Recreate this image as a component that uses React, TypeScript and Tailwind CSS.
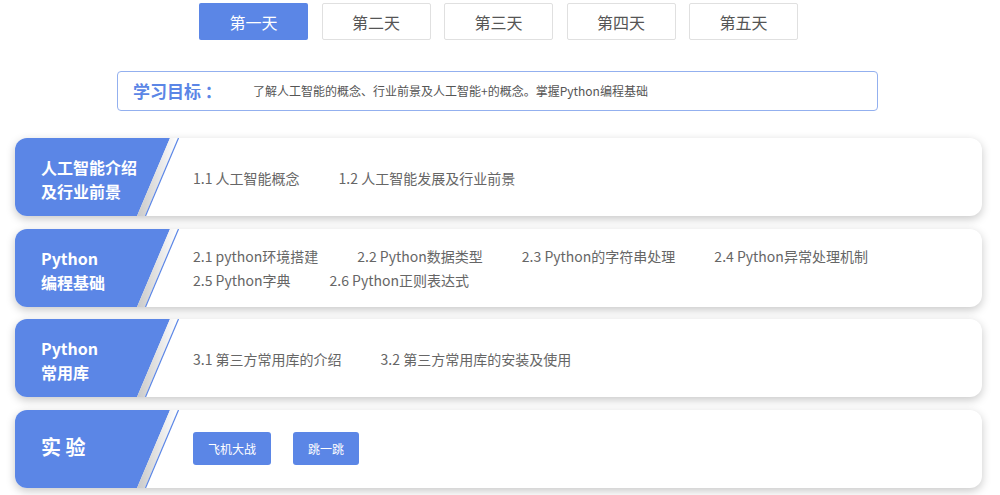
import React from "react";

const BLUE = "#5b86e6";

function Slant() {
  return (
    <svg className="absolute inset-0" width="170" height="78" viewBox="0 0 170 78" preserveAspectRatio="none">
      <defs>
        <linearGradient id="sh" x1="0" y1="0" x2="1" y2="0">
          <stop offset="0" stopColor="#c9c9c9" />
          <stop offset="1" stopColor="#ffffff" />
        </linearGradient>
      </defs>
      <polygon points="0,0 155,0 122,78 0,78" fill={BLUE} />
      <polygon points="155,0 163,0 130,78 122,78" fill="url(#sh)" />
      <line x1="163.5" y1="0" x2="130.5" y2="78" stroke={BLUE} strokeWidth="1.2" />
    </svg>
  );
}

function Card({ title, children }: { title: React.ReactNode; children: React.ReactNode }) {
  return (
    <div className="flex h-[78px] w-[967px] rounded-[12px] bg-white shadow-[0_3px_10px_rgba(0,0,0,0.22)] overflow-hidden">
      <div className="relative w-[178px] shrink-0 h-full">
        <Slant />
        <div className="relative h-full flex items-center pl-[26px] pt-[4px] text-white font-bold text-[16px] leading-[24px]">
          {title}
        </div>
      </div>
      <div className="flex-1 flex items-center pr-[20px]">{children}</div>
    </div>
  );
}

function Items({ items }: { items: string[] }) {
  return (
    <div className="flex flex-wrap gap-x-[39px] text-[14px] leading-[24px] text-[#666] pt-[1px]">
      {items.map((t) => (
        <span key={t}>{t}</span>
      ))}
    </div>
  );
}

export default function App() {
  const tabs = ["第一天", "第二天", "第三天", "第四天", "第五天"];
  return (
    <div
      className="w-[1000px] h-[495px] bg-white overflow-hidden"
      style={{ fontFamily: '"Noto Sans CJK SC", "Noto Sans", sans-serif' }}
    >
      <div className="flex pl-[199px] pt-[3px] gap-[13.5px]">
        {tabs.map((t, i) => (
          <div
            key={t}
            className={
              i === 0
                ? "w-[109px] h-[37px] flex items-center justify-center rounded-[2px] bg-[#5b86e6] text-white text-[16px]"
                : "w-[109px] h-[37px] flex items-center justify-center rounded-[2px] border border-[#e0e0e0] bg-white text-[#555] text-[16px]"
            }
          >
            {t}
          </div>
        ))}
      </div>

      <div className="ml-[117px] mt-[31px] w-[761px] h-[40px] flex items-center rounded-[4px] border border-[#93b0ef] pl-[15px]">
        <span className="w-[120px] text-[17px] font-bold text-[#5b86e6]">学习目标 ：</span>
        <span className="text-[12px] text-[#555]">了解人工智能的概念、行业前景及人工智能+的概念。掌握Python编程基础</span>
      </div>

      <div className="ml-[15px] mt-[27px] flex flex-col gap-[12.5px]">
        <Card
          title={
            <div>
              人工智能介绍
              <br />
              及行业前景
            </div>
          }
        >
          <Items items={["1.1 人工智能概念", "1.2 人工智能发展及行业前景"]} />
        </Card>
        <Card
          title={
            <div>
              Python
              <br />
              编程基础
            </div>
          }
        >
          <Items
            items={[
              "2.1 python环境搭建",
              "2.2 Python数据类型",
              "2.3 Python的字符串处理",
              "2.4 Python异常处理机制",
              "2.5 Python字典",
              "2.6 Python正则表达式",
            ]}
          />
        </Card>
        <Card
          title={
            <div>
              Python
              <br />
              常用库
            </div>
          }
        >
          <Items items={["3.1 第三方常用库的介绍", "3.2 第三方常用库的安装及使用"]} />
        </Card>
        <Card title={<div className="text-[20px] mb-[7px]">实 验</div>}>
          <div className="flex gap-[22px]">
            <div className="h-[33px] px-[15px] flex items-center rounded-[3px] bg-[#5b86e6] text-white text-[12px]">飞机大战</div>
            <div className="h-[33px] px-[15px] flex items-center rounded-[3px] bg-[#5b86e6] text-white text-[12px]">跳一跳</div>
          </div>
        </Card>
      </div>
    </div>
  );
}
